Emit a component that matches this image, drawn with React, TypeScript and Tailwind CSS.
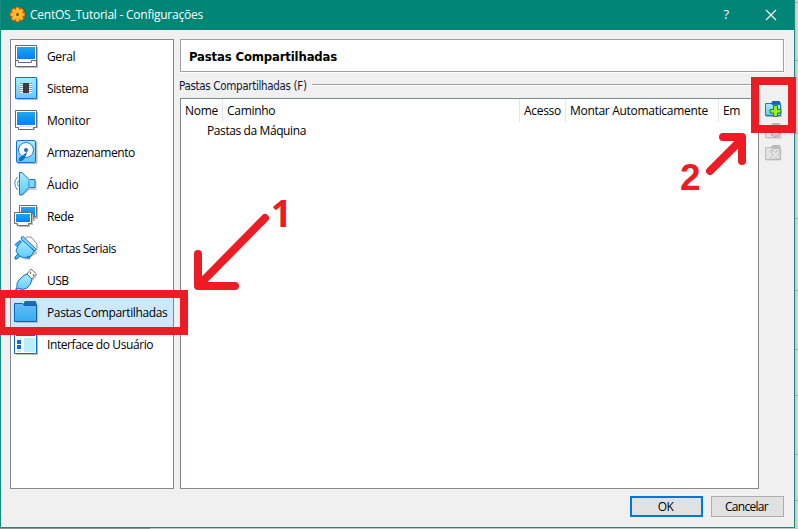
import React from "react";

const UI = "font-['Open_Sans','Noto_Sans',sans-serif]";

function Defs() {
  return (
    <svg width="0" height="0" className="absolute">
      <defs>
        <linearGradient id="screen" x1="0" y1="0" x2="0" y2="1">
          <stop offset="0" stopColor="#22a7e8" />
          <stop offset="1" stopColor="#0080fc" />
        </linearGradient>
        <linearGradient id="light" x1="0" y1="0" x2="0" y2="1">
          <stop offset="0" stopColor="#a9ecff" />
          <stop offset="1" stopColor="#5bcbfc" />
        </linearGradient>
        <linearGradient id="folder" x1="0" y1="0" x2="0" y2="1">
          <stop offset="0" stopColor="#62bdf0" />
          <stop offset="1" stopColor="#35aef2" />
        </linearGradient>
      </defs>
    </svg>
  );
}

function Icon({ children }: { children: React.ReactNode }) {
  return (
    <svg width="24" height="24" viewBox="0 0 24 24" className="shrink-0">
      {children}
    </svg>
  );
}

const GeneralIcon = () => (
  <Icon>
    <path d="M3 3h21v21H3z" fill="#bdbdbd" />
    <path d="M1.5 1.5h21v21h-21z" fill="#fff" stroke="#6a6a6a" />
    <path d="M3 3h18v12H3z" fill="url(#screen)" />
    <path d="M1.500 16.500h3v2h13v-2h5" fill="none" stroke="#6a6a6a" />
  </Icon>
);
const SystemIcon = () => (
  <Icon>
    <path d="M3 3h21v21H3z" fill="#bdbdbd" />
    <path d="M1.500 1.500h21v21h-21z" fill="url(#light)" stroke="#1670cf" />
    <path d="M6 8.500h12M6 10.500h12M6 12.500h12M6 14.500h12M6 16.500h12" stroke="#fff" />
    <path d="M6 7.500h12M6 9.500h12M6 11.500h12M6 13.500h12M6 15.500h12" stroke="#71a7bd" />
    <path d="M9 7h6v10H9z" fill="#383d45" />
  </Icon>
);
const MonitorIcon = () => (
  <Icon>
    <path d="M3 4h21v16h-3v2H6v-2H3z" fill="#bdbdbd" />
    <path d="M1.500 2.500h21v17h-3v2h-15v-2h-3z" fill="#fff" stroke="#6a6a6a" />
    <path d="M3 4h18v13H3z" fill="url(#screen)" />
    <path d="M5 18.500h13" stroke="#ddd" />
  </Icon>
);
const StorageIcon = () => (
  <Icon>
    <rect x="3.500" y="1.500" width="20" height="23" rx="1.500" fill="#bdbdbd" />
    <rect x="2.500" y=".5" width="19" height="22" rx="1.500" fill="url(#light)" stroke="#1670cf" />
    <circle cx="12" cy="10" r="7.500" fill="#fff" stroke="#2878c4" />
    <path d="M4.500 20.500c2 1.500 4 .5 6-2l3-7-5 4-3 2z" fill="#1769ca" />
    <circle cx="12" cy="10" r="2" fill="#1769ca" />
  </Icon>
);
const AudioIcon = () => (
  <Icon>
    <path d="M8 3l6 6h8.500v9h-7l-7 6z" fill="#bdbdbd" opacity=".8" />
    <path d="M5.500.5h2.500l7 7v8l-7 7.500H5.500z" fill="url(#light)" stroke="#1972cc" />
    <path d="M15.500 7.500h5.500v8h-5.500" fill="#84d8ff" stroke="#1972cc" />
    <path d="M3.500 5q-5.500 6 0 13M4.500 8.500q-2 3 0 6" fill="none" stroke="#378bd0" />
  </Icon>
);
const NetworkIcon = () => (
  <Icon>
    <path d="M7 3h17v12h-3v2H7z" fill="#bdbdbd" />
    <path d="M5.500 1.500h17v11h-3v2h-14z" fill="#fff" stroke="#6a6a6a" />
    <path d="M7 3h14v9H7z" fill="url(#screen)" />
    <path d="M2 10h17v11h-3v2H5v-2H2z" fill="#bdbdbd" />
    <path d="M.5 8.500h17v11h-3v2h-11v-2h-3z" fill="#fff" stroke="#6a6a6a" />
    <path d="M2 10h14v8H2z" fill="url(#screen)" />
  </Icon>
);
const SerialIcon = () => (
  <Icon>
    <path d="M10 3.500l3-2.500h4l6 7v5l-2 2z" fill="#fff" stroke="#8d8d8d" />
    <path d="M10 5l14 12-7 4-5 3-7-5z" fill="#bdbdbd" />
    <path d="M5 7l4-3 11 11-3 5-7 2-5-2-3-5z" fill="url(#light)" stroke="#1972cc" />
    <path d="M7 1.500l2-1 13.500 13-1.500 1.500L8 4z" fill="#84d8ff" stroke="#1972cc" />
    <path d="M1 8.500l5-4 1 2-4 4zM4 18l2 2-3 3H1v-2zM13 21l2-1 1 2-2 1z" fill="#48b5f5" stroke="#1972cc" />
  </Icon>
);
const UsbIcon = () => (
  <Icon>
    <path d="M8 8l9-6 6 6-8 9q-5 7-13 7z" fill="#bdbdbd" opacity=".8" />
    <path d="M13 6l4-5 5.500 5-5 5z" fill="#fff" stroke="#777" />
    <path d="M16 4.500l1 1m2 1l1 1" stroke="#555" strokeWidth="1.500" />
    <path d="M1 23l2-4q-1-4 2-7 3-4 8-6l5 5q-1 6-5 9-4 3-9 0z" fill="url(#light)" stroke="#1972cc" />
  </Icon>
);
const FolderIcon = () => (
  <Icon>
    <path d="M2 5h22v18H2z" fill="#a9bdcc" />
    <path d="M9 5.500l2-4h10.500l1 4z" fill="#1f67bd" stroke="#1f67bd" />
    <path d="M.5 3.500h8l2 2h12v16H.5z" fill="url(#folder)" stroke="#1260b7" />
  </Icon>
);
const InterfaceIcon = () => (
  <Icon>
    <path d="M2 3h22v20H2z" fill="#bdbdbd" />
    <path d="M.5.5h22v21H.5z" fill="#fff" stroke="#126bc5" />
    <path d="M2 1h19v3H2z" fill="#0766be" />
    <path d="M3 8h4v4H3zM3 13h4v4H3z" fill="#126bd0" />
    <path d="M3 6h4v1H3zM3 18h4v2H3z" fill="#b9eeff" />
    <path d="M10 6h11v14H10z" fill="#b9eeff" />
  </Icon>
);

function GearIcon() {
  return (
    <svg width="18" height="18" viewBox="0 0 18 18" className="shrink-0">
      <g stroke="#b8490d" strokeWidth="5">
        <path d="M8.500 1v15M1 8.500h15M3 3l11 11M14 3L3 14" />
      </g>
      <g stroke="#ffae28" strokeWidth="3.400">
        <path d="M8.500 1.500v14M1.500 8.500h14M3.500 3.500l10 10M13.500 3.500l-10 10" />
      </g>
      <circle cx="8.500" cy="8.500" r="5.200" fill="#ffb92e" />
      <circle cx="8.500" cy="8.500" r="1.500" fill="#8e4a14" />
    </svg>
  );
}

function ActionFolder({ kind }: { kind: "add" | "edit" | "remove" }) {
  const on = kind === "add";
  return (
    <svg width="17" height="16" viewBox="0 0 17 16" className="block">
      <path d="M1 4h15.500v12H1z" fill={on ? "#aaa" : "#ddd"} />
      <path d="M6 3.500l1.500-3h7l1 3z" fill={on ? "#1764bc" : "#bcbcbc"} stroke={on ? "#1764bc" : "#b5b5b5"} />
      <path d="M.5 2.500H6l1 1h8.500v11H.5z" fill={on ? "url(#light)" : "#e2e2e2"} stroke={on ? "#2676c5" : "#bdbdbd"} />
      {on && <path d="M8.500 4.500h4v4h3.500v3.500h-3.500v3.500h-4v-3.500H5v-3.500h3.500z" fill="#93ef20" stroke="#288016" />}
      {kind === "edit" && <circle cx="10.500" cy="9.500" r="4" fill="#d9d9d9" stroke="#aaa" strokeWidth="2" strokeDasharray="2 1" />}
      {kind === "remove" && <path d="M6 5.500l2 0 2.500 2 2.500-2h2v2l-2 2.500 2 2.500v2h-2l-2.500-2-2.500 2H6v-2L8 10 6 7.500z" fill="#e4e4e4" stroke="#aaa" strokeDasharray="2 1" />}
    </svg>
  );
}

const items = [
  { label: "Geral", icon: GeneralIcon, cls: "tracking-[-0.4px]" },
  { label: "Sistema", icon: SystemIcon, cls: "tracking-[-0.4px]" },
  { label: "Monitor", icon: MonitorIcon, cls: "tracking-[-0.25px]" },
  { label: "Armazenamento", icon: StorageIcon, cls: "tracking-[-0.42px]" },
  { label: "Áudio", icon: AudioIcon, cls: "tracking-[-0.2px]" },
  { label: "Rede", icon: NetworkIcon, cls: "tracking-[-0.4px]" },
  { label: "Portas Seriais", icon: SerialIcon, cls: "tracking-[-0.48px]" },
  { label: "USB", icon: UsbIcon, cls: "tracking-[-0.6px]" },
  { label: "Pastas Compartilhadas", icon: FolderIcon, cls: "tracking-[-0.38px]" },
  { label: "Interface do Usuário", icon: InterfaceIcon, cls: "tracking-[-0.41px]" },
];

function TitleBar() {
  return (
    <header className="flex h-[30px] shrink-0 items-center bg-[#008577] pl-2 text-white">
      <GearIcon />
      <span className="ml-[3px] flex-1 text-[12px] tracking-[-0.24px]">CentOS_Tutorial - Configurações</span>
      <span className="mr-9 text-[13px]">?</span>
      <svg width="12" height="12" viewBox="0 0 12 12" className="mr-[17px]">
        <path d="M1 1l10 10M11 1L1 11" stroke="#fff" strokeWidth="1.200" />
      </svg>
    </header>
  );
}

function Annotations() {
  return (
    <svg width="798" height="529" viewBox="0 0 798 529" className="pointer-events-none absolute left-0 top-0">
      <g fill="none" stroke="#ed1c24">
        <path d="M1 294h183v37H1z" strokeWidth="8" />
        <path d="M755 81h37v48h-37z" strokeWidth="8" />
        <g strokeWidth="8" strokeLinecap="round" strokeLinejoin="round">
          <path d="M265 218L199 285M198 254v32h37" />
          <path d="M710 171L742 139M723 137h19v24" />
        </g>
      </g>
      <g fill="#ed1c24" fontWeight="700" fontSize="37">
        <text x="270.800" y="227" fontFamily="Open Sans, sans-serif">1</text>
        <text x="680" y="190" fontFamily="Liberation Sans, Arial, sans-serif">2</text>
      </g>
    </svg>
  );
}

function Backdrop() {
  return (
    <div className="flex flex-1 flex-col bg-linear-to-r from-[#c4c4c4] to-[#dadada]">
      <div className="h-[3px] border-b border-[#a8a8a8]" />
      <div className="h-[58px] border-b border-[#a8a8a8]" />
      <div className="h-[73px] border-b border-[#a8a8a8]" />
      <div className="h-[85px] border-b border-[#a8a8a8]" />
      <div className="h-[72px] border-b border-[#a8a8a8]" />
      <div className="h-[59px] border-b border-[#a8a8a8]" />
      <div className="h-[46px] border-b border-[#a8a8a8]" />
      <div className="h-[59px] border-b border-[#a8a8a8]" />
      <div className="h-[46px] border-b border-[#a8a8a8]" />
    </div>
  );
}

export default function App() {
  return (
    <div className={`relative h-[529px] w-[798px] overflow-hidden bg-[#d6d6d6] text-black ${UI}`}>
      <Defs />
      <div className="flex h-[528px]">
        <div className="flex w-[795px] shrink-0 flex-col border border-t-0 border-[#168b7e] bg-[#f0f0f0]">
          <TitleBar />
          <main className="flex h-[459px] pl-[9px] pt-[9px]">
            <nav className="h-[450px] w-[164px] border border-[#828790] bg-white">
              {items.map(({ label, icon: Glyph, cls }, i) => (
                <div key={label} className={`flex h-8 items-center gap-[9px] pl-[3px] ${i === 8 ? "bg-[#cce8ff]" : ""}`}>
                  <Glyph />
                  <span className={`whitespace-nowrap pt-0.5 text-[12px] ${cls}`}>{label}</span>
                </div>
              ))}
            </nav>
            <section className="ml-1.5 flex w-[604px] flex-col">
              <h1 className="flex h-[33px] shrink-0 items-center border border-[#a0a0a0] bg-white pl-2 pt-0.5 font-['DejaVu_Sans_Condensed','DejaVu_Sans',sans-serif] text-[13px] font-bold tracking-[-0.16px] shadow-[1px_1px_0_#fff]">
                Pastas Compartilhadas
              </h1>
              <div className="-ml-px flex h-[26px] shrink-0 items-center gap-2">
                <span className="w-[125px] whitespace-nowrap pt-[3px] font-['DejaVu_Sans_Condensed','DejaVu_Sans',sans-serif] text-[11.500px] tracking-[-0.32px] text-[#101a33]">
                  Pastas Compartilhadas (F)
                </span>
                <span className="h-0.5 flex-1 border-t border-[#a0a0a0] bg-white" />
              </div>
              <div className="flex flex-1">
                <div className="w-[579px] border border-[#828790] bg-white text-[12px]">
                  <div className="flex h-[23px] items-center tracking-[-0.3px] whitespace-nowrap">
                    <span className="h-full w-[42px] border-r border-[#e5e5e5] pl-1 leading-[23px]">Nome</span>
                    <span className="h-full w-[297px] border-r border-[#e5e5e5] pl-1 leading-[23px]">Caminho</span>
                    <span className="h-full w-[46px] border-r border-[#e5e5e5] pl-1 leading-[23px]">Acesso</span>
                    <span className="h-full w-[153px] border-r border-[#e5e5e5] pl-1 leading-[23px]">Montar Automaticamente</span>
                    <span className="pl-1">Em</span>
                  </div>
                  <div className="h-[18px] pl-[26px] leading-[18px] tracking-[-0.4px]">Pastas da Máquina</div>
                </div>
                <div className="ml-1.5 flex flex-col gap-1.5 pt-[3px]">
                  <ActionFolder kind="add" />
                  <ActionFolder kind="edit" />
                  <ActionFolder kind="remove" />
                </div>
              </div>
            </section>
          </main>
          <footer className="mt-[7px] flex justify-end gap-2 pr-2.5 text-[12px] tracking-[-0.7px]">
            <button className="h-[21px] w-[73px] border-2 border-[#0078d7] bg-[#e1e1e1] pr-0.5 leading-[17px]">OK</button>
            <button className="h-[21px] w-[73px] border border-[#adadad] bg-[#e1e1e1] pr-0.5 leading-[19px]">Cancelar</button>
          </footer>
        </div>
        <Backdrop />
      </div>
      <div className="flex h-px w-[798px] bg-[#b9c8c5]">
        <div className="w-[150px] bg-[#8b9693]" />
      </div>
      <Annotations />
    </div>
  );
}
